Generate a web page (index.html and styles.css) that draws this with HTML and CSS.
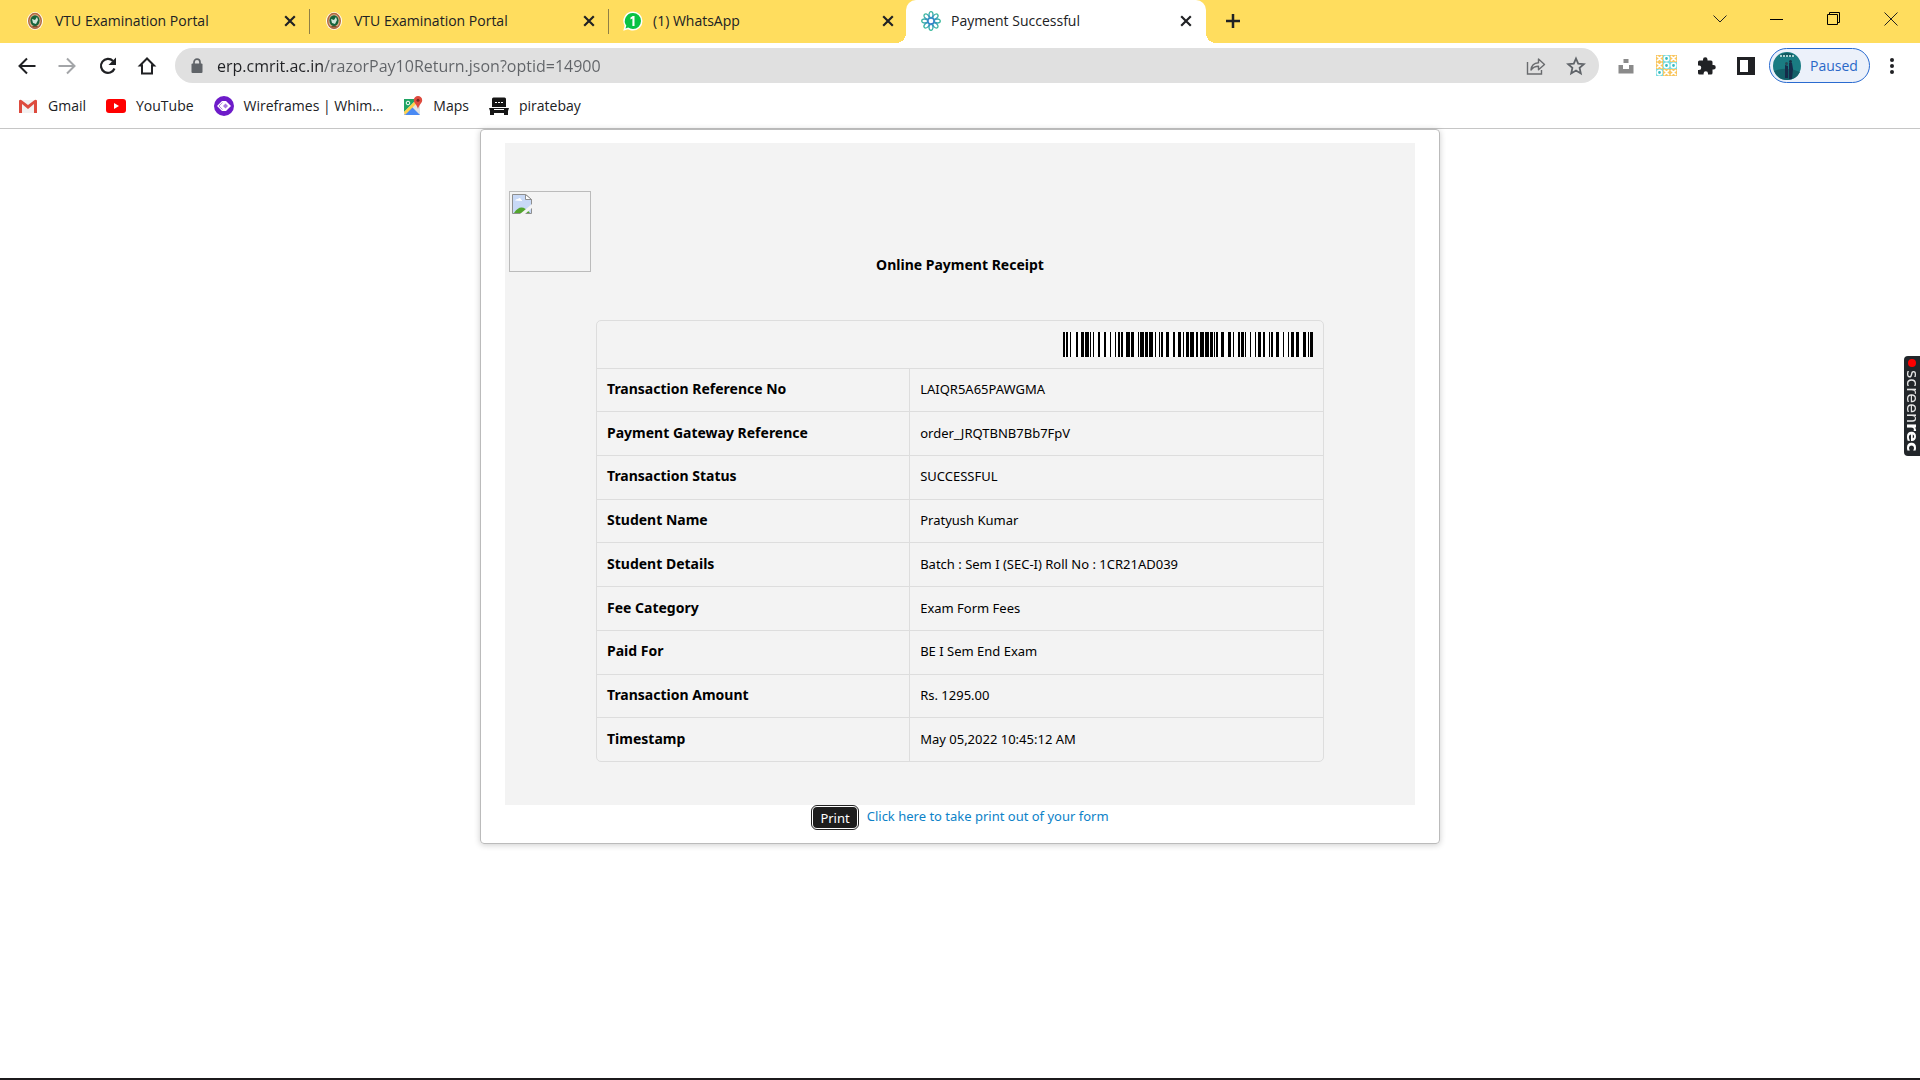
FILE: index.html
```html
<!DOCTYPE html>
<html lang="en">
<head>
<meta charset="utf-8">
<title>Payment Successful</title>
<link rel="stylesheet" href="styles.css">
</head>
<body>
<svg class="defs" aria-hidden="true">
  <symbol id="close" viewBox="0 0 10 10"><path d="M1 1l8 8M9 1L1 9" stroke="#202124" stroke-width="1.800"/></symbol>
  <symbol id="vtu" viewBox="0 0 16 18">
    <ellipse cx="8" cy="9" rx="8" ry="9" fill="#fff"/>
    <ellipse cx="8" cy="9" rx="6.3" ry="7.5" fill="#ddb08a" stroke="#b2683f" stroke-width="1.4"/>
    <ellipse cx="8" cy="8.600" rx="4.600" ry="5.400" fill="#17633a"/>
    <path d="M5 7l3 1 2-3 1 3-2 4-3-1z" fill="#cfe6d8"/><path d="M5 14h6l-1 1.500H6z" fill="#7c4a2c"/>
  </symbol>
</svg>

<header class="browser">
  <div class="tabstrip">
    <nav class="tabs" aria-label="Tabs">
      <div class="tab"><svg class="favicon" viewBox="0 0 16 18"><use href="#vtu"/></svg><span class="tab-title">VTU Examination Portal</span><button class="tab-close" aria-label="Close tab"><svg width="12" height="12"><use href="#close"/></svg></button></div>
      <div class="tab"><svg class="favicon" viewBox="0 0 16 18"><use href="#vtu"/></svg><span class="tab-title">VTU Examination Portal</span><button class="tab-close" aria-label="Close tab"><svg width="12" height="12"><use href="#close"/></svg></button></div>
      <div class="tab tab-last"><svg class="favicon favicon-wide" viewBox="0 0 20 20"><path d="M10 .5a9.500 9.500 0 0 1 0 19c-2 0-3.500-.4-5-1.300L.3 19.700l1.300-5A9.500 9.500 0 0 1 10 .5z" fill="#fff"/><path d="M10 2a8 8 0 0 1 0 16c-2 0-3.500-.5-4.800-1.400l-2.700.8.8-2.800A8 8 0 0 1 10 2z" fill="#0ac244"/><path d="M7.500 6.500l2.300-1.400h1.700V15H9.400V7.500l-1.900 1z" fill="#fff"/></svg><span class="tab-title">(1) WhatsApp</span><button class="tab-close" aria-label="Close tab"><svg width="12" height="12"><use href="#close"/></svg></button></div>
      <div class="tab tab-active"><svg class="favicon favicon-wide" viewBox="0 0 20 20">
        <defs><linearGradient id="petal" x1="0" y1="0" x2="0" y2="20" gradientUnits="userSpaceOnUse"><stop offset="0" stop-color="#3fbf9a"/><stop offset=".5" stop-color="#2f79d6"/><stop offset="1" stop-color="#4436b8"/></linearGradient></defs>
        <g fill="none" stroke="url(#petal)" stroke-width="1.300"><circle cx="10" cy="10" r="3"/><ellipse cx="10" cy="3.700" rx="2" ry="3"/><ellipse cx="10" cy="3.700" rx="2" ry="3" transform="rotate(45 10 10)"/><ellipse cx="10" cy="3.700" rx="2" ry="3" transform="rotate(90 10 10)"/><ellipse cx="10" cy="3.700" rx="2" ry="3" transform="rotate(135 10 10)"/><ellipse cx="10" cy="3.700" rx="2" ry="3" transform="rotate(180 10 10)"/><ellipse cx="10" cy="3.700" rx="2" ry="3" transform="rotate(225 10 10)"/><ellipse cx="10" cy="3.700" rx="2" ry="3" transform="rotate(270 10 10)"/><ellipse cx="10" cy="3.700" rx="2" ry="3" transform="rotate(315 10 10)"/></g></svg><span class="tab-title">Payment Successful</span><button class="tab-close" aria-label="Close tab"><svg width="12" height="12"><use href="#close"/></svg></button></div>
      <button class="new-tab" aria-label="New tab"><svg width="16" height="16" viewBox="0 0 16 16"><path d="M8 1v14M1 8h14" stroke="#202124" stroke-width="2.500"/></svg></button>
    </nav>
    <div class="window-controls">
      <button aria-label="Search tabs"><svg width="14" height="14" viewBox="0 0 14 14"><path d="M.5 3.500L7 10l6.500-6.500" fill="none" stroke="#222"/></svg></button>
      <button aria-label="Minimize"><svg width="14" height="14" viewBox="0 0 14 14"><path d="M0 7.500h13" stroke="#000"/></svg></button>
      <button aria-label="Restore"><svg width="14" height="14" viewBox="0 0 14 14"><path d="M.5 2.500h10v10H.5zM2.500 2.500v-2h10v10h-2" fill="none" stroke="#000"/></svg></button>
      <button aria-label="Close window"><svg width="14" height="14" viewBox="0 0 14 14"><path d="M.5.5l13 13M13.500.5l-13 13" stroke="#222"/></svg></button>
    </div>
  </div>

  <div class="toolbar">
    <div class="nav-buttons">
      <button aria-label="Back"><svg width="20" height="20" viewBox="0 0 20 20"><path d="M18.500 10H3M10 2.500L2.500 10l7.500 7.500" fill="none" stroke="#202124" stroke-width="2"/></svg></button>
      <button aria-label="Forward"><svg width="20" height="20" viewBox="0 0 20 20"><path d="M1.500 10H17M10 2.500l7.500 7.500-7.500 7.500" fill="none" stroke="#a3a5a8" stroke-width="2"/></svg></button>
      <button aria-label="Reload"><svg width="20" height="20" viewBox="0 0 20 20"><path d="M17.500 12.500a7 7 0 1 1-1.500-7.500" fill="none" stroke="#202124" stroke-width="2.200"/><path d="M19 1.500v7.500h-7.500z" fill="#202124"/></svg></button>
      <button aria-label="Home"><svg width="20" height="20" viewBox="0 0 20 20"><path d="M10 2.500L3 9.500h2V17.500h10V9.500h2z" fill="none" stroke="#202124" stroke-width="2"/></svg></button>
    </div>
    <div class="omnibox">
      <svg width="12" height="16" viewBox="0 0 12 16"><path d="M3 6V4.200a3 3 0 0 1 6 0V6" fill="none" stroke="#5f6368" stroke-width="1.700"/><rect x=".5" y="5.500" width="11" height="9.500" rx="1" fill="#5f6368"/></svg>
      <input class="url" type="text" aria-label="Address" value="erp.cmrit.ac.in/razorPay10Return.json?optid=14900">
      <button aria-label="Share"><svg width="20" height="20" viewBox="0 0 20 20"><path d="M1.500 6v12h14v-4" fill="none" stroke="#696b6e" stroke-width="1.400"/><path d="M5 14c.4-4.500 3-7 7.500-7.300V3l6 5.500-6 5.200V10.300C9.500 10.300 7 11.300 5 14z" fill="none" stroke="#696b6e" stroke-width="1.400" stroke-linejoin="round"/></svg></button>
      <button aria-label="Bookmark this page"><svg width="20" height="20" viewBox="0 0 20 20"><path d="M10 2.500l2.200 5.200 5.600.5-4.200 3.700 1.200 5.500-4.800-2.900-4.800 2.900 1.200-5.500-4.200-3.700 5.600-.5z" fill="none" stroke="#5f6368" stroke-width="1.800"/></svg></button>
    </div>
    <div class="extensions">
      <button aria-label="Unsplash"><svg width="20" height="20" viewBox="0 0 20 20"><path d="M7.500 3h5v4h-5zM2.500 9H7v4h6V9h4.500v8.500h-15z" fill="#8a8a8a"/></svg></button>
      <button aria-label="Tic tac toe"><svg width="21" height="21" viewBox="0 0 21 21"><rect width="21" height="21" fill="#fff"/><g fill="#f9c660"><path d="M0 0h7v7H0zM14 0h7v7h-7zM0 7h7v7H0zM7 14h14v7H7z"/></g><g stroke="#fff" stroke-width="1.700"><path d="M1 1l5 5M6 1L1 6M15 1l5 5M20 1l-5 5M1 8l5 5M6 8l-5 5M8 15l5 5M13 15l-5 5M15 15l5 5M20 15l-5 5"/></g><path d="M7 0h7v7h7v7H7zM0 14h7v7H0z" fill="#7cdcdf"/><g fill="#35bcc2" stroke="#fff" stroke-width="1.600"><circle cx="10.500" cy="3.500" r="2.200"/><circle cx="10.500" cy="10.500" r="2.200"/><circle cx="17.500" cy="10.500" r="2.200"/><circle cx="3.500" cy="17.500" r="2.200"/></g></svg></button>
      <button aria-label="Extensions"><svg width="20" height="20" viewBox="0 0 20 20"><path d="M2 6q0-1.500 1.500-1.500H7V3.500a2.200 2.200 0 0 1 4.500 0v1H15q1.500 0 1.500 1.500v3h1a2.200 2.200 0 0 1 0 4.500h-1V17q0 1.500-1.500 1.500h-3v-1a2.200 2.200 0 0 0-4.400 0v1H3.500Q2 18.500 2 17v-3h1a2.200 2.200 0 0 0 0-4.500H2z" fill="#202124"/></svg></button>
      <button aria-label="Side panel"><svg width="18" height="18" viewBox="0 0 18 18"><path fill-rule="evenodd" d="M0 0h18v18H0zM3 3v12h8V3z" fill="#202124"/></svg></button>
    </div>
    <button class="profile"><svg width="28" height="28" viewBox="0 0 28 28"><circle cx="14" cy="14" r="14" fill="#1a7c82"/><path d="M6 4.500Q14-3 22 4.500z" fill="#12595f"/><path d="M7 4h14" stroke="#a8d0d0" stroke-width="2" stroke-dasharray="2 1"/><path d="M1 19q13-5 26 1-4 8-13 8T1 19z" fill="#136068"/><path d="M12 13l3 1v12h-3zM16 11h3l1 6-1 10h-3z" fill="#152c4a"/><circle cx="13.500" cy="11.500" r="1.500" fill="#274a56"/><circle cx="17.500" cy="9.500" r="1.500" fill="#182f43"/></svg>Paused</button>
    <button class="menu" aria-label="Menu"><svg width="6" height="18" viewBox="0 0 6 18"><g fill="#202124"><circle cx="3" cy="3" r="2"/><circle cx="3" cy="9" r="2"/><circle cx="3" cy="15" r="2"/></g></svg></button>
  </div>

  <nav class="bookmarks" aria-label="Bookmarks">
    <a href="#"><svg width="20" height="20" viewBox="0 0 20 20"><path d="M2 4h16v13H2z" fill="#f2f2f2"/><path d="M1 4.500V17h3V8l6 5 6-5v9h3V4.500q-1.500-1.500-3 0L10 9 4 4.500q-1.500-1.500-3 0z" fill="#dd4b3e"/></svg>Gmail</a>
    <a href="#"><svg width="20" height="20" viewBox="0 0 20 20"><rect y="3" width="20" height="14" rx="3" fill="#f00"/><path d="M8 7v6l5-3z" fill="#fff"/></svg>YouTube</a>
    <a href="#"><svg width="20" height="20" viewBox="0 0 20 20"><circle cx="10" cy="10" r="10" fill="#6d1bc9"/><path d="M8 5h4l5 5-5 5H8l-5-5z" fill="#fff"/><path d="M8.500 6.500L5 10l3.500 3.500" fill="none" stroke="#b48be2" stroke-width="1"/><path d="M11.500 7.500l2.500 2.500-2.500 2.500L9 10z" fill="#a87ade"/></svg>Wireframes | Whim...</a>
    <a href="#"><svg width="20" height="20" viewBox="0 0 20 20"><path d="M1 3h16v16H1z" fill="#e3e3e3"/><path d="M1 3h13L1 16z" fill="#1fa463"/><path d="M1 19l8-8 8 8z" fill="#4a8af4"/><path d="M1 16L14 3l2 2L2 19z" fill="#ffd04b"/><circle cx="5" cy="7" r="1.800" fill="none" stroke="#fff"/><path d="M15 0a4.200 4.200 0 0 1 4.200 4.200C19.200 7 16 8.500 15 13c-1-4.500-4.200-6-4.200-8.800A4.200 4.200 0 0 1 15 0z" fill="#de4b3e"/><circle cx="15" cy="4.300" r="1.500" fill="#7c2721"/></svg>Maps</a>
    <a href="#"><svg width="20" height="20" viewBox="0 0 20 20"><path d="M3 3q0-1.500 1.500-1.500h11Q17 1.500 17 3v8H3zM0 12h20l-1 3H1zM3 12h14v3h2v4h-4v-2H5v2H1v-4h2z" fill="#161616"/><path d="M6 6h2v1H6zM9 6h2v1H9zM12 6h2v1h-2zM5 13h10v1H5z" fill="#fff"/></svg>piratebay</a>
  </nav>
</header>

<main class="page">
  <section class="card">
    <div class="receipt">
      <svg class="broken-image" role="img" aria-label="College logo" width="20" height="20" viewBox="0 0 20 20"><path d="M.5.5h13l6 5v14H.5z" fill="#c8d9f6" stroke="#8e8e8e"/><path d="M13.500.5v5h6z" fill="#fff" stroke="#8e8e8e"/><path d="M2 19q7-11 16 0z" fill="#53a52d"/><path d="M3 6.500q1-2 3-1.500 2-2 3 .5 1.500.5 1 1.500z" fill="#fff"/><path d="M20 10v4l-7 6H8z" fill="#f3f3f3"/></svg>
      <h1>Online Payment Receipt</h1>
      <table>
        <tr><td class="barcode" colspan="2"><svg role="img" aria-label="Transaction barcode" width="250" height="25" viewBox="0 0 250 25"><rect width="250" height="25" fill="#fff"/><path d="M0 12.500h250" stroke="#000" stroke-width="25" stroke-dasharray="2 1 2 2 1 5 2 3 3 1 4 1 1 2 1 4 2 4 2 4 1 4 1 2 2 1 2 3 4 1 3 4 1 1 4 1 3 1 4 2 1 3 1 1 2 3 3 4 2 3 3 2 1 2 3 1 4 2 2 2 4 1 4 1 3 1 1 1 2 3 3 4 3 2 1 4 2 1 3 1 1 4 1 4 1 2 3 2 2 4 1 1 2 3 3 4 1 4 1 2 3 2 3 4 3 2 1 1 3 9" shape-rendering="crispEdges"/></svg></td></tr>
        <tr><th scope="row">Transaction Reference No</th><td>LAIQR5A65PAWGMA</td></tr>
        <tr><th scope="row">Payment Gateway Reference</th><td>order_JRQTBNB7Bb7FpV</td></tr>
        <tr><th scope="row">Transaction Status</th><td>SUCCESSFUL</td></tr>
        <tr><th scope="row">Student Name</th><td>Pratyush Kumar</td></tr>
        <tr><th scope="row">Student Details</th><td>Batch : Sem I (SEC-I) Roll No : 1CR21AD039</td></tr>
        <tr><th scope="row">Fee Category</th><td>Exam Form Fees</td></tr>
        <tr><th scope="row">Paid For</th><td>BE I Sem End Exam</td></tr>
        <tr><th scope="row">Transaction Amount</th><td>Rs. 1295.00</td></tr>
        <tr><th scope="row">Timestamp</th><td>May 05,2022 10:45:12 AM</td></tr>
      </table>
    </div>
    <div class="print-row">
      <button class="print">Print</button>
      <a href="#">Click here to take print out of your form</a>
    </div>
  </section>
</main>
<footer class="taskbar"></footer>
<aside class="recorder"><span class="dot"></span><span>screen<b>rec</b></span></aside>
</body>
</html>
```
FILE: styles.css
```css
* { box-sizing: border-box; }

body {
  margin: 0;
  min-height: 100vh;
  display: flex;
  flex-direction: column;
  background: #fff;
  color: #202124;
  font: 14px/20px "Open Sans", sans-serif;
}

button {
  display: flex;
  align-items: center;
  justify-content: center;
  margin: 0;
  padding: 0;
  border: 0;
  background: none;
  color: inherit;
  font: inherit;
}

svg { display: block; flex: none; }
a { text-decoration: none; }
.defs { position: absolute; width: 0; height: 0; }

/* Browser chrome */
.browser { border-bottom: 1px solid #c6c6c6; }

.tabstrip {
  display: flex;
  justify-content: space-between;
  height: 43px;
  background: #ffdd5e;
}

.tabs { display: flex; flex: 1; padding-left: 11px; min-width: 0; }

.tab {
  display: flex;
  align-items: center;
  flex: 0 1 299px;
  padding: 0 14px 2px 16px;
  position: relative;
}

.tab::after {
  content: "";
  position: absolute;
  right: 0;
  top: 9px;
  width: 1px;
  height: 25px;
  background: #8f7f45;
}

.tab-last::after, .tab-active::after { display: none; }
.tab-last { flex-basis: 297px; padding: 0 12px 2px 14px; }
.tab-active { flex-basis: 300px; padding-left: 15px; background: #fff; border-radius: 10px 10px 0 0; }
.tab-active::before {
  content: "";
  position: absolute;
  left: -10px;
  right: -10px;
  bottom: 0;
  height: 10px;
  background:
    radial-gradient(circle at 0 0, #ffdd5e 10px, #fff 10px) left / 10px 10px no-repeat,
    radial-gradient(circle at 100% 0, #ffdd5e 10px, #fff 10px) right / 10px 10px no-repeat;
}
.favicon { width: 16px; height: 20px; margin-right: 12px; }
.favicon-wide { width: 20px; margin-right: 10px; }
.tab-title { flex: 1; white-space: nowrap; overflow: hidden; }
.new-tab { width: 54px; padding-bottom: 2px; }

.window-controls { display: flex; padding-right: 1px; }
.window-controls button { width: 57px; height: 37px; }

.toolbar {
  display: flex;
  align-items: center;
  padding: 5px 18px 4px 7px;
}

.nav-buttons { display: flex; margin-right: 8px; }
.nav-buttons button { width: 40px; height: 35px; }

.omnibox {
  display: flex;
  flex: 1;
  align-items: center;
  height: 35px;
  padding: 0 3px 0 16px;
  border-radius: 18px;
  background: #e0e0e0;
}
.omnibox button { width: 40px; height: 35px; }

.url {
  flex: 1;
  min-width: 0;
  margin: 0 0 0 14px;
  padding: 0;
  border: 0;
  outline: 0;
  background: linear-gradient(to right, #202124 107px, #606367 107px);
  background-clip: text;
  color: transparent;
  font: 16px/24px "Open Sans", sans-serif;
}

.extensions { display: flex; margin: 0 3px 0 7px; }
.extensions button { width: 40px; height: 35px; }

.profile {
  height: 35px;
  width: 101px;
  gap: 9px;
  padding-right: 8px;
  border: 1px solid #2a6bd0;
  border-radius: 18px;
  background: #ecf1fa;
  color: #2a68c8;
}
.menu { width: 44px; height: 35px; margin-right: -12px; }

.bookmarks { display: flex; gap: 20px; padding: 9px 18px 12px; }
.bookmarks a { display: flex; align-items: center; gap: 10px; color: #202124; }

/* Receipt */
.page {
  flex: 1;
  padding: 0 16px;
  color: #000;
  font: 13px/20px "Noto Sans", sans-serif;
}

.card {
  max-width: 960px;
  margin: 0 auto;
  padding: 13px 24px;
  border: 1px solid #bbb;
  border-radius: 4px;
  box-shadow: 0 1px 6px rgba(0, 0, 0, .2);
}

.receipt { padding: 48px 4px 43px; background: #f3f3f3; }

.broken-image {
  width: 82px;
  height: 81px;
  padding: 2px 58px 57px 2px;
  border: 1px solid #bbb;
}

h1 { margin: -17px 0 45px; text-align: center; font-size: 14px; line-height: 20px; }

table {
  width: 728px;
  max-width: 100%;
  height: 442px;
  margin: 0 auto;
  border: 1px solid #ddd;
  border-radius: 5px;
  border-spacing: 0;
}

th, td { height: 43px; padding: 0 10px 2px; text-align: left; border-top: 1px solid #ddd; }
th { width: 43%; font-size: 14px; }
th + td { border-left: 1px solid #ddd; }
td.barcode { height: 46px; padding-bottom: 0; border: 0; }
.barcode svg { margin-left: auto; }

.print-row { display: flex; justify-content: center; gap: 8px; }
.print-row a { color: #0d82c8; line-height: 22px; }

.print {
  height: 21px;
  margin: 2px;
  padding: 0 7px;
  border-radius: 4px;
  background: #1d1d1d;
  color: #fff;
  outline: 1px solid #222;
  outline-offset: 1px;
}

.taskbar { height: 2px; background: #1c1a1c; }

/* Recorder handle docked over the window's right edge */
.recorder {
  position: fixed;
  right: 0;
  top: 356px;
  display: flex;
  align-items: center;
  gap: 3px;
  width: 16px;
  height: 100px;
  padding: 3px 0;
  border-radius: 4px 0 0 4px;
  background: #22262a;
  color: #e6e6e6;
  font: 16px/16px "DejaVu Sans", sans-serif;
  writing-mode: vertical-rl;
}
.recorder b { color: #fff; }
.dot { width: 8px; height: 8px; border-radius: 50%; background: #f00; }
```
